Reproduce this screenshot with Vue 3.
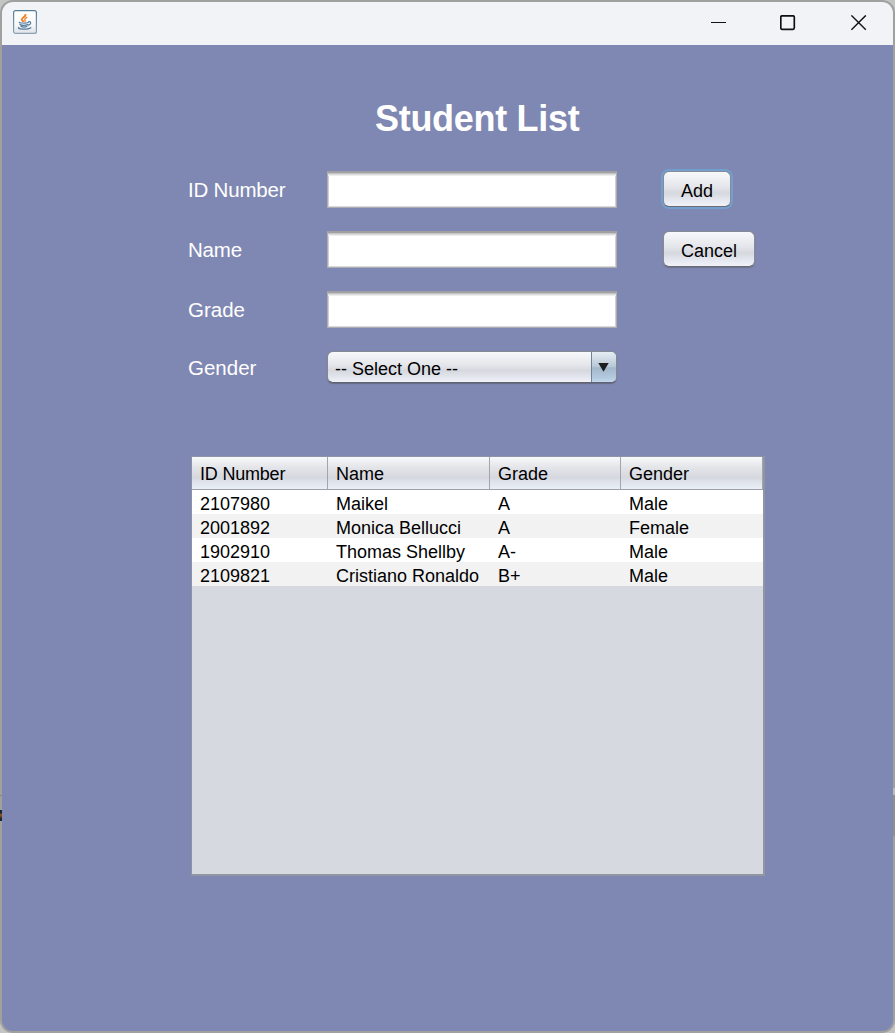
<script setup>
import { ref } from 'vue'

const fields = [
  { label: 'ID Number', action: 'Add', focused: true },
  { label: 'Name', action: 'Cancel', focused: false },
  { label: 'Grade', action: '', focused: false },
]
const values = ref(['', '', ''])
const columns = ['ID Number', 'Name', 'Grade', 'Gender']
const students = [
  ['2107980', 'Maikel', 'A', 'Male'],
  ['2001892', 'Monica Bellucci', 'A', 'Female'],
  ['1902910', 'Thomas Shellby', 'A-', 'Male'],
  ['2109821', 'Cristiano Ronaldo', 'B+', 'Male'],
]
</script>

<template>
  <div class="desktop">
    <i class="sliver seam"></i>
    <i class="sliver dark"></i>
    <i class="sliver light"></i>
    <i class="sliver shade"></i>
    <div class="window">
      <header class="titlebar">
        <svg class="app-icon" width="24" height="24" viewBox="0 0 24 24">
          <defs>
            <linearGradient id="tile" x1="0" y1="0" x2="0" y2="1">
              <stop offset="0" stop-color="#ffffff" />
              <stop offset="0.6" stop-color="#f8f9fa" />
              <stop offset="1" stop-color="#dfe3e7" />
            </linearGradient>
            <linearGradient id="rim" x1="0" y1="0" x2="0" y2="1">
              <stop offset="0" stop-color="#557c98" />
              <stop offset="1" stop-color="#8ba3b5" />
            </linearGradient>
          </defs>
          <rect x="0.6" y="0.6" width="22.8" height="22.8" rx="2" fill="url(#tile)" stroke="url(#rim)" stroke-width="1.2" />
          <path d="M12.300 4.100c1.300 2.300-4.300 3.700-3.400 5.700.3.800 1.300 1.200 1.800 1.900" fill="none" stroke="#ee8127" stroke-width="1.900" />
          <path d="M14.300 7.300c-2 .8-3 1.800-2.300 2.800.5.700.4 1-.4 1.600" fill="none" stroke="#f08b38" stroke-width="1.500" />
          <g fill="none" stroke="#527b9c" stroke-width="1.200" stroke-linecap="round">
            <path d="M6.200 12.300c-.4.9 7.800 1 9 .1" />
            <path d="M7 14.600c1.900.8 6 .7 7.800 0" />
            <path d="M8 16.400c1.500.7 4.500.7 6-.1" />
            <path d="M15.700 11.700c2.900-.5 2.500 2.700-.3 3.500" />
            <path d="M5.900 17.500c-3 2 9 2.200 11.900.2" />
          </g>
        </svg>
        <div class="controls">
          <svg width="16" height="16" viewBox="0 0 16 16"><path d="M0 8.500h15" /></svg>
          <svg width="16" height="16" viewBox="0 0 16 16"><rect x=".8" y=".8" width="13.500" height="13.500" rx="1.300" /></svg>
          <svg width="16" height="16" viewBox="0 0 16 16"><path d="M.4.400l14.400 14.400M14.800.4.400 14.800" /></svg>
        </div>
      </header>
      <main class="content">
        <h1>Student List</h1>
        <form class="form" @submit.prevent>
          <template v-for="(f, i) in fields" :key="f.label">
            <label :class="{ tight: i < 2 }">{{ f.label }}</label>
            <input v-model="values[i]" class="field" type="text" />
            <button v-if="f.action" type="button" class="button" :class="{ focused: f.focused }">{{ f.action }}</button>
            <span v-else></span>
          </template>
          <label>Gender</label>
          <div class="combo">
            <span class="choice">-- Select One --</span>
            <span class="arrow">
              <svg width="11" height="9" viewBox="0 0 11 9"><path d="M.3 0h10.400L5.500 8.800z" fill="#1c1e20" /></svg>
            </span>
          </div>
        </form>
        <section class="scroll">
          <table>
            <colgroup><col class="c1" /><col class="c2" /><col class="c3" /><col class="c4" /></colgroup>
            <thead><tr><th v-for="c in columns" :key="c">{{ c }}</th></tr></thead>
            <tbody>
              <tr v-for="s in students" :key="s[0]"><td v-for="(v, i) in s" :key="i">{{ v }}</td></tr>
            </tbody>
          </table>
        </section>
      </main>
    </div>
  </div>
</template>

<style>
html, body { margin: 0; overflow: hidden; }
</style>

<style scoped>
* { box-sizing: border-box; }
.desktop {
  position: relative;
  width: 895px;
  height: 1033px;
  padding: 2px;
  background: #c4c4c4;
  font-family: "Liberation Sans", Arial, sans-serif;
  font-size: 18px;
  color: #000;
}
.window {
  display: flex;
  flex-direction: column;
  height: 1029px;
  width: 891px;
  border-radius: 11px;
  overflow: hidden;
  background: #7f88b2;
  box-shadow: 0 0 0 2px #a0a09f;
}
.sliver { position: absolute; z-index: 1; width: 2px; }
.seam { left: 0; top: 795px; height: 1px; background: #858585; }
.dark { left: 0; top: 810px; height: 11px; background: linear-gradient(#1b2634 25%, #9a5a20 45%, #6b4020 60%, #1b2634 80%); }
.light { right: 0; top: 788px; height: 7px; background: #bcbcbc; }
.shade { right: 0; top: 795px; height: 41px; background: #8f8f8f; }
.titlebar {
  display: flex;
  justify-content: space-between;
  height: 43px;
  padding: 8px 26px 0 11px;
  background: #f1f3f7;
}
.controls { display: flex; gap: 54px; padding-top: 4px; }
.controls svg { fill: none; stroke: #111; stroke-width: 1.4; }
.controls svg:first-child { stroke-width: 1; }
.controls svg:nth-child(2) { stroke-width: 1.7; margin: 1px 0 0 -1px; }
.controls svg:nth-child(3) { margin: 1px 0 0 1px; }
.content { flex: 1; padding: 51px 0 0 186px; }
h1 {
  margin: 0 0 30px 187px;
  font-size: 36px;
  line-height: 45px;
  letter-spacing: -0.3px;
  color: #fff;
}
.form {
  display: grid;
  grid-template-columns: 139px 290px auto;
  grid-template-rows: 37px 37px 37px 33px;
  row-gap: 23px;
  align-items: center;
}
label { font-size: 20.5px; line-height: 24px; color: #fff; }
label.tight { letter-spacing: -0.2px; }
.field {
  width: 290px;
  height: 37px;
  padding: 0 8px;
  outline: none;
  border: 1px solid #abadb4;
  border-top: 2px solid #a0a0a2;
  border-radius: 0;
  background: #fff;
  box-shadow: inset 0 1px 0 #c6c6c6, inset 0 2px 0 #dadada, inset 0 3px 0 #efefef, inset 1px 0 0 #d1d1d1, inset -1px 0 0 #d1d1d1, inset 0 -1px 0 #dadada;
  font: inherit;
}
.button {
  align-self: start;
  justify-self: start;
  margin: 0 0 0 46px;
  height: 36px;
  padding: 4px 17px 0 17px;
  border: 1px solid #888b94;
  border-bottom-color: #696c75;
  border-radius: 6px;
  background: linear-gradient(#f8f9fb, #e4e5ea 45%, #d6d8df 62%, #e4e7ef 82%, #f0f2f7);
  box-shadow: 0 1px 1px #6c728f;
  font: inherit;
  color: #000;
}
.button.focused { box-shadow: 0 0 0 2px #729fcf; }
.combo {
  display: flex;
  align-self: start;
  width: 290px;
  height: 32px;
  border: 1px solid #858890;
  border-bottom-color: #60636b;
  border-radius: 6px;
  overflow: hidden;
  background: linear-gradient(#f8f9fb, #e4e5ea 45%, #d6d8df 62%, #e4e7ef 85%, #f0f2f7);
  box-shadow: 0 1px 1px #646a85;
}
.choice { flex: 1; padding: 1px 0 0 7px; line-height: 32px; }
.arrow {
  width: 25px;
  padding: 11px 0 0 6px;
  border-left: 1px solid #6f8394;
  background: linear-gradient(#e6edf3, #b8c9d8 48%, #a3b8ca 53%, #b3c9de 85%, #c4d9ed);
}
.arrow svg { display: block; }
.scroll {
  width: 574px;
  height: 420px;
  margin: 72px 0 0 3px;
  border: 1px solid #8e94a6;
  border-right: 2px solid #9095a1;
  border-bottom: 2px solid #9095a1;
  background: #d6d9e0;
}
table { width: 571px; table-layout: fixed; border-collapse: separate; border-spacing: 0; }
.c1 { width: 136px; }
.c2 { width: 162px; }
.c3 { width: 131px; }
.c4 { width: 142px; }
th {
  height: 33px;
  padding: 2px 0 0 8px;
  text-align: left;
  font-weight: normal;
  line-height: 30px;
  border-right: 1px solid #a2a5ad;
  border-bottom: 1px solid #9da0aa;
  background: linear-gradient(#f8f9fb, #e4e5e9 32%, #d6d8df 65%, #dee1e8 76%, #eaf0f8);
}
th:first-child { letter-spacing: -0.2px; }
td { height: 24px; padding: 4px 0 0 8px; line-height: 20px; background: #fff; white-space: nowrap; }
tbody tr:nth-child(even) td { background: #f2f2f2; }
</style>
